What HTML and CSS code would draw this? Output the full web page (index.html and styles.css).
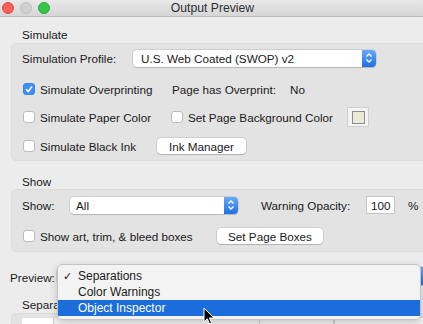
FILE: index.html
```html
<!DOCTYPE html>
<html lang="en">
<head>
  <meta charset="UTF-8">
  <title>Output Preview</title>
  <link rel="stylesheet" href="styles.css">
</head>
<body>
  <div class="window">
    <div class="titlebar">
      <div class="lights">
        <span class="light red"></span>
        <span class="light gray"></span>
        <span class="light green"></span>
      </div>
      <div class="title">Output Preview</div>
      <div></div>
    </div>

    <div class="content">
      <!-- Simulate -->
      <div class="section-title">Simulate</div>
      <div class="group sim-group">
        <div class="row">
          <span class="field-label profile-label">Simulation Profile:</span>
          <div class="select profile-select">
            <span class="select-text">U.S. Web Coated (SWOP) v2</span>
            <span class="stepper"><svg width="8" height="12" viewBox="0 0 8 12"><path d="M1.5 4.5 L4 2 L6.5 4.5 M1.5 7.5 L4 10 L6.5 7.5" fill="none" stroke="#fff" stroke-width="1.3"/></svg></span>
          </div>
        </div>
        <div class="row row-overprint">
          <label class="check-item w-overprint"><span class="checkbox checked"><svg width="10" height="10" viewBox="0 0 10 10"><path d="M2 5.2 L4.2 7.5 L8 2.5" fill="none" stroke="#fff" stroke-width="1.6"/></svg></span>Simulate Overprinting</label>
          <span class="field-label w-has">Page has Overprint:</span>
          <span>No</span>
        </div>
        <div class="row row-paper">
          <label class="check-item w-paper"><span class="checkbox"></span>Simulate Paper Color</label>
          <label class="check-item w-bg"><span class="checkbox"></span>Set Page Background Color</label>
          <span class="swatch"><span class="swatch-fill"></span></span>
        </div>
        <div class="row row-ink">
          <label class="check-item w-ink"><span class="checkbox"></span>Simulate Black Ink</label>
          <span class="button ink-button">Ink Manager</span>
        </div>
      </div>

      <!-- Show -->
      <div class="section-title show-title">Show</div>
      <div class="group show-group">
        <div class="row">
          <span class="field-label show-label">Show:</span>
          <div class="select show-select">
            <span class="select-text">All</span>
            <span class="stepper"><svg width="8" height="12" viewBox="0 0 8 12"><path d="M1.5 4.5 L4 2 L6.5 4.5 M1.5 7.5 L4 10 L6.5 7.5" fill="none" stroke="#fff" stroke-width="1.3"/></svg></span>
          </div>
          <span class="field-label opacity-label">Warning Opacity:</span>
          <span class="text-input">100</span>
          <span class="percent">%</span>
        </div>
        <div class="row row-boxes">
          <label class="check-item w-boxes"><span class="checkbox"></span>Show art, trim, &amp; bleed boxes</label>
          <span class="button boxes-button">Set Page Boxes</span>
        </div>
      </div>

      <!-- Preview (its value is hidden under the open menu) -->
      <div class="row preview-row">
        <span class="field-label preview-label">Preview:</span>
        <div class="select preview-select">
          <span class="select-text"></span>
          <span class="stepper"></span>
        </div>
      </div>

      <div class="section-title sep-title">Separa</div>
      <div class="group sep-group">
        <div class="sep-header">
          <span class="sep-cell swatch-cell"></span>
          <span class="sep-cell name-cell"></span>
          <span class="sep-cell pct-cell"></span>
          <span class="sep-cell"></span>
        </div>
      </div>
    </div>

    <!-- popup menu over the Preview select -->
    <div class="menu">
      <div class="menu-item"><span class="check">✓</span>Separations</div>
      <div class="menu-item"><span class="check"></span>Color Warnings</div>
      <div class="menu-item selected"><span class="check"></span>Object Inspector</div>
    </div>

    <svg class="cursor" width="12" height="18" viewBox="0 0 12 18">
      <path d="M1 1 L1 15 L4.3 11.8 L6.6 17 L8.6 16.1 L6.4 11 L11 11 Z" fill="#000" stroke="#fff" stroke-width="1"/>
    </svg>
  </div>
</body>
</html>
```

FILE: styles.css
```css
* {
  box-sizing: border-box;
}

body {
  margin: 0;
  font-family: "Liberation Sans", Arial, sans-serif;
  font-size: 11.7px;
  color: #1a1a1a;
  background: #ececec;
}

.window {
  position: relative;
  width: 423px;
  height: 324px;
  overflow: hidden;
  background: #ececec;
}

.titlebar {
  display: grid;
  grid-template-columns: 1fr auto 1fr;
  align-items: center;
  height: 17px;
  padding-left: 2px;
  background: linear-gradient(#e8e8e8, #d6d6d6);
  border-bottom: 1px solid #bdbdbd;
}

.lights {
  display: flex;
  gap: 6px;
}

.light {
  width: 12px;
  height: 12px;
  border-radius: 50%;
}

.light.red {
  background: #fc5f57;
  border: 0.5px solid #df4744;
}

.light.gray {
  background: #d0d0d0;
  border: 0.5px solid #c0c0c0;
}

.light.green {
  background: #33c748;
  border: 0.5px solid #27aa35;
}

.title {
  font-size: 12.2px;
  color: #2e2e2e;
}

.content {
  padding-left: 11px;
}

.section-title {
  margin: 11px 0 1px 11px;
  line-height: 14px;
}

.show-title {
  margin-top: 14px;
  margin-bottom: 0;
}

.group {
  margin-right: -12px;
  background: #e3e3e3;
  border: 1px solid #dcdcdc;
  border-radius: 5px;
  padding-left: 10px;
}

.sim-group {
  padding-top: 4px;
  padding-bottom: 4px;
}

.show-group {
  padding-top: 5px;
  padding-bottom: 5px;
}

.row {
  display: flex;
  align-items: center;
  height: 20px;
  white-space: nowrap;
}

.row-overprint {
  margin-top: 11px;
}

.row-paper {
  margin-top: 8px;
}

.row-ink {
  margin-top: 9px;
}

.row-boxes {
  margin-top: 11px;
}

.profile-label {
  width: 111px;
}

.show-label {
  width: 48px;
}

.opacity-label {
  margin-left: 23px;
  width: 105px;
}

.w-has {
  width: 118px;
}

.w-overprint {
  width: 150px;
}

.w-paper {
  width: 148px;
}

.w-bg {
  width: 177px;
}

.w-ink {
  width: 135px;
}

.w-boxes {
  width: 195px;
}

.check-item {
  display: flex;
  align-items: center;
  padding-left: 1px;
}

.checkbox {
  display: inline-flex;
  align-items: center;
  justify-content: center;
  width: 12px;
  height: 12px;
  margin-right: 5px;
  background: #fff;
  border: 1px solid #bcbcbc;
  border-radius: 3px;
}

.checkbox.checked {
  background: #3d8ff7;
  border-color: #3a84e6;
}

.select {
  display: flex;
  align-items: center;
  height: 17px;
  background: #fff;
  border-radius: 4px;
  box-shadow: 0 0 0 0.5px rgba(0, 0, 0, 0.18), 0 1px 1px rgba(0, 0, 0, 0.12);
  overflow: hidden;
}

.select-text {
  flex: 1;
  padding-left: 8px;
}

.stepper {
  display: flex;
  align-items: center;
  justify-content: center;
  width: 14px;
  height: 100%;
  background: linear-gradient(#6aaaf8, #1f6fe3);
}

.profile-select {
  width: 243px;
}

.show-select {
  width: 168px;
}

.show-select .select-text {
  padding-left: 6px;
}

.button {
  display: flex;
  align-items: center;
  justify-content: center;
  height: 16px;
  background: #fff;
  border-radius: 4px;
  box-shadow: 0 0 0 0.5px rgba(0, 0, 0, 0.18), 0 1px 1px rgba(0, 0, 0, 0.14);
}

.ink-button {
  width: 89px;
}

.boxes-button {
  width: 106px;
}

.swatch {
  display: flex;
  align-items: center;
  justify-content: center;
  width: 22px;
  height: 20px;
  background: #f4f4f4;
  border: 1px solid #cfcfcf;
}

.swatch-fill {
  width: 13px;
  height: 13px;
  background: #e9ebd6;
  border: 1px solid #8e8e8e;
}

.text-input {
  width: 29px;
  height: 18px;
  padding: 2px 0 0 4px;
  background: #fff;
  border: 1px solid #c6c6c6;
  line-height: 13px;
}

.percent {
  margin-left: 13px;
}

.preview-row {
  margin-top: 15px;
  margin-left: -1px;
}

.preview-label {
  width: 47px;
}

.preview-select {
  width: 376px;
  height: 18px;
  margin-right: -20px;
  align-self: flex-start;
}

.sep-title {
  margin-top: 11px;
}

.sep-group {
  height: 30px;
  padding-top: 4px;
}

.sep-header {
  display: flex;
  height: 12px;
  background: #f4f4f4;
  border-bottom: 1px solid #d8d8d8;
}

.sep-cell {
  border-right: 1px solid #d0d0d0;
}

.swatch-cell {
  width: 32px;
  background: #fff;
}

.name-cell {
  width: 206px;
}

.pct-cell {
  width: 74px;
}

.menu {
  position: absolute;
  left: 57px;
  top: 264px;
  width: 364px;
  height: 56px;
  padding-top: 3px;
  background: rgba(243, 243, 243, 0.98);
  border: 1px solid #c4c4c4;
  border-radius: 5px;
  box-shadow: 0 3px 8px rgba(0, 0, 0, 0.2);
  overflow: hidden;
}

.menu-item {
  display: flex;
  align-items: center;
  height: 16px;
  padding-left: 5px;
  font-size: 12px;
  color: #1a1a1a;
}

.menu-item.selected {
  background: #1b6ddb;
  color: #fff;
}

.check {
  width: 15px;
  font-size: 11px;
}

.cursor {
  position: absolute;
  left: 203px;
  top: 307px;
}
```
